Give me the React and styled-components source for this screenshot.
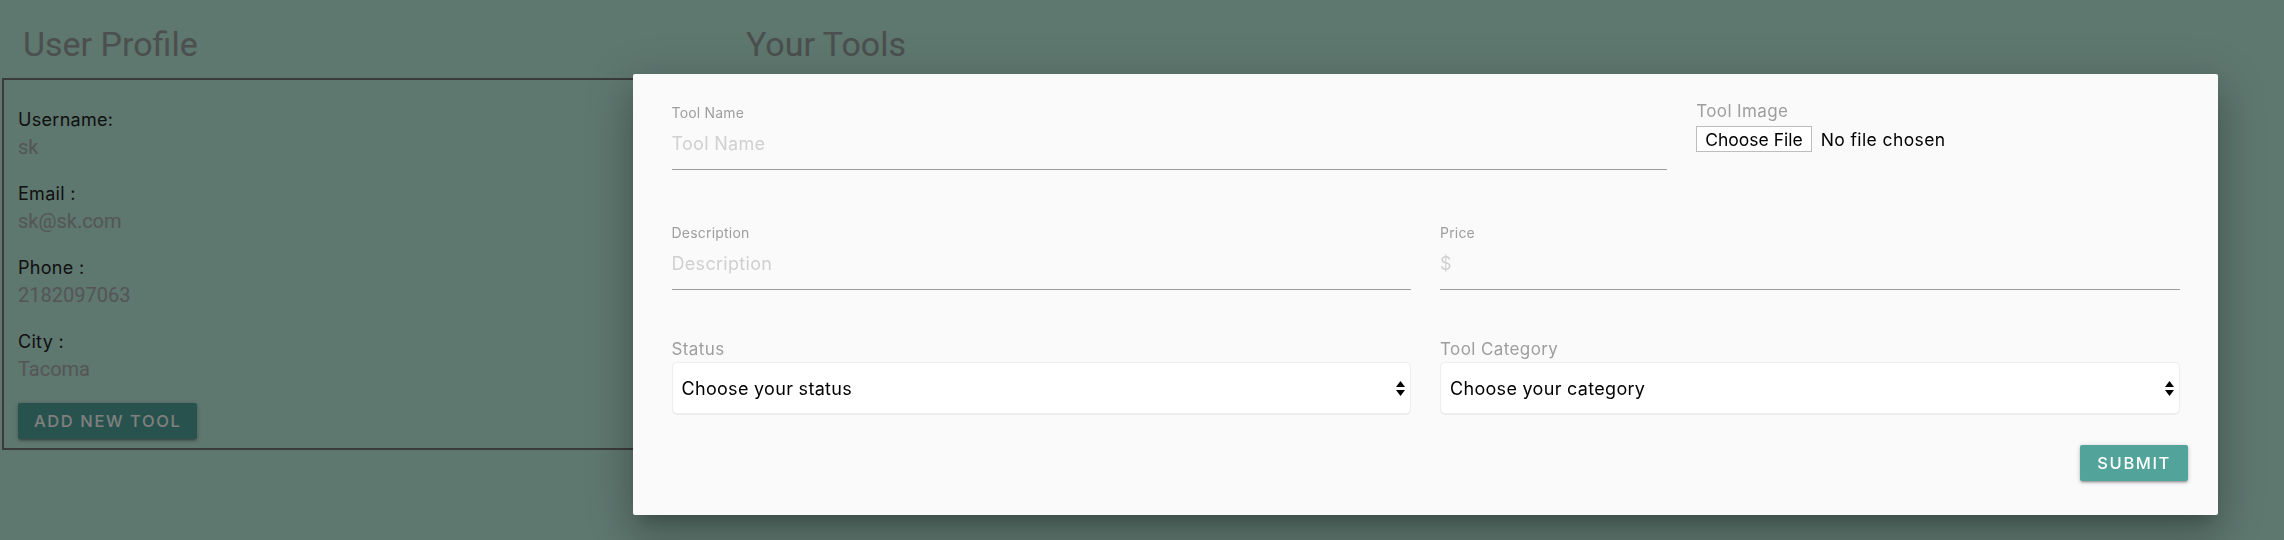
import React from 'react'
import styled, { createGlobalStyle } from 'styled-components'

const GlobalStyle = createGlobalStyle`
  html, body {
    margin: 0;
    padding: 0;
  }
  body {
    background: #bdeedf;
    font-family: Roboto, "Liberation Sans", sans-serif;
    overflow: hidden;
  }
  * {
    box-sizing: border-box;
  }
`

const Page = styled.div`
  display: flex;
  align-items: flex-start;
  min-height: 540px;
`

const ProfileColumn = styled.section`
  flex: none;
  width: 745px;
`

const ToolsColumn = styled.section`
  flex: 1;
`

const Heading = styled.h2`
  margin: 24px 0 14px;
  padding-left: ${props => props.$indent}px;
  font: 400 34px/40px Roboto, "Liberation Sans", sans-serif;
  color: #979f9b;
`

const ProfileCard = styled.div`
  width: 700px;
  margin-left: 2px;
  border: 2px solid #777;
  padding: 28.5px 14px 9px;
  display: flex;
  flex-direction: column;
  align-items: flex-start;
`

const InfoGroup = styled.div`
  & + & {
    margin-top: 24px;
  }
`

const InfoLabel = styled.div`
  font: 400 18px/22px Inter, "Noto Sans", sans-serif;
  letter-spacing: 0.3px;
  color: #222;
`

const InfoValue = styled.div`
  margin-top: 4px;
  font: 400 20px/24px Roboto, "Liberation Sans", sans-serif;
  color: #a9adab;
`

const RaisedButton = styled.button`
  height: 36px;
  padding: 0 ${props => props.$pad}px;
  border: none;
  border-radius: 2px;
  background: ${props => props.$bg};
  color: #fff;
  font: 500 16.5px/36px Inter, "Noto Sans", sans-serif;
  letter-spacing: 1.6px;
  text-transform: uppercase;
  box-shadow: 0 2px 2px 0 rgba(0, 0, 0, 0.14), 0 3px 1px -2px rgba(0, 0, 0, 0.12), 0 1px 5px 0 rgba(0, 0, 0, 0.2);
  cursor: pointer;
`

const AddButton = styled(RaisedButton)`
  margin-top: 22px;
`

const Overlay = styled.div`
  position: fixed;
  inset: 0;
  background: rgba(0, 0, 0, 0.5);
  z-index: 10;
`

const Modal = styled.div`
  position: absolute;
  top: 74px;
  left: 633px;
  width: 1585px;
  z-index: 11;
  padding: 27px 24px 34px;
  background: #fafafa;
  border-radius: 2px;
  box-shadow: 0 24px 38px 3px rgba(0, 0, 0, 0.14), 0 9px 46px 8px rgba(0, 0, 0, 0.12), 0 11px 15px -7px rgba(0, 0, 0, 0.2);
  font-family: Inter, "Noto Sans", sans-serif;
`

const FormRow = styled.div`
  display: flex;
  align-items: flex-start;
  margin-top: ${props => props.$spacing || 0}px;
`

const Col = styled.div`
  flex: none;
  width: ${props => (props.$span / 12) * 100}%;
  padding: 0 14.5px;
`

const FieldLabel = styled.label`
  display: block;
  margin-top: 3px;
  font: 400 14px/17px Inter, "Noto Sans", sans-serif;
  letter-spacing: 0.2px;
  color: #9e9e9e;
`

const TextInput = styled.input`
  display: block;
  width: 100%;
  height: 49px;
  padding: 0 0 4px;
  border: none;
  border-bottom: 1px solid #9e9e9e;
  background: transparent;
  font: 400 18px Inter, "Noto Sans", sans-serif;
  letter-spacing: 0.3px;
  color: #000;
  outline: none;

  &::placeholder {
    color: #d0d0d0;
  }
`

const BigLabel = styled.label`
  display: block;
  font: 400 17px/20px Inter, "Noto Sans", sans-serif;
  letter-spacing: 0.4px;
  color: #9e9e9e;
`

const FilePicker = styled.div`
  display: flex;
  align-items: center;
  margin-top: 5px;
  font: 400 17.5px Inter, "Noto Sans", sans-serif;
  letter-spacing: 0.4px;
  color: #000;
`

const FileButton = styled.button`
  height: 26px;
  padding: 0 8px;
  border: 1px solid #bdbdbd;
  background: #fff;
  font: inherit;
  color: inherit;
`

const FileStatus = styled.span`
  margin-left: 9px;
`

const SelectBox = styled.div`
  display: flex;
  align-items: center;
  height: 52px;
  margin-top: 3px;
  padding-right: 5px;
  background: #fff;
  border: 1px solid #eeeeee;
  border-radius: 5px;
  box-shadow: 0 1px 0 #ececec;
`

const Select = styled.select`
  flex: 1;
  height: 100%;
  padding: 0 0 0 9px;
  border: none;
  background: transparent;
  appearance: none;
  font: 400 18px Inter, "Noto Sans", sans-serif;
  letter-spacing: 0.3px;
  color: #000;
  outline: none;
`

const Footer = styled.div`
  display: flex;
  justify-content: flex-end;
  margin-top: 31px;
  padding-right: 6px;
`

const SelectArrows = () => (
  <svg width="9" height="15" viewBox="0 0 9 15">
    <polygon points="0,6 4.5,0 9,6" fill="#000" />
    <polygon points="0,9 4.5,15 9,9" fill="#000" />
  </svg>
)

const profile = [
  { label: 'Username:', value: 'sk' },
  { label: 'Email :', value: 'sk@sk.com' },
  { label: 'Phone :', value: '2182097063' },
  { label: 'City :', value: 'Tacoma' }
]

const SelectField = ({ label, placeholder }) => (
  <Col $span={6}>
    <BigLabel>{label}</BigLabel>
    <SelectBox>
      <Select defaultValue="">
        <option value="" disabled>{placeholder}</option>
      </Select>
      <SelectArrows />
    </SelectBox>
  </Col>
)

export default function App() {
  return (
    <>
      <GlobalStyle />
      <Page>
        <ProfileColumn>
          <Heading $indent={23}>User Profile</Heading>
          <ProfileCard>
            {profile.map(item => (
              <InfoGroup key={item.label}>
                <InfoLabel>{item.label}</InfoLabel>
                <InfoValue>{item.value}</InfoValue>
              </InfoGroup>
            ))}
            <AddButton $bg="#4ea59a" $pad={16}>Add New Tool</AddButton>
          </ProfileCard>
        </ProfileColumn>
        <ToolsColumn>
          <Heading $indent={1}>Your Tools</Heading>
        </ToolsColumn>
      </Page>

      <Overlay />
      <Modal>
        <form onSubmit={e => e.preventDefault()}>
          <FormRow>
            <Col $span={8}>
              <FieldLabel htmlFor="toolName">Tool Name</FieldLabel>
              <TextInput id="toolName" type="text" placeholder="Tool Name" />
            </Col>
            <Col $span={4}>
              <BigLabel>Tool Image</BigLabel>
              <FilePicker>
                <FileButton type="button">Choose File</FileButton>
                <FileStatus>No file chosen</FileStatus>
              </FilePicker>
            </Col>
          </FormRow>
          <FormRow $spacing={51}>
            <Col $span={6}>
              <FieldLabel htmlFor="description">Description</FieldLabel>
              <TextInput id="description" type="text" placeholder="Description" />
            </Col>
            <Col $span={6}>
              <FieldLabel htmlFor="price">Price</FieldLabel>
              <TextInput id="price" type="text" placeholder="$" />
            </Col>
          </FormRow>
          <FormRow $spacing={49}>
            <SelectField label="Status" placeholder="Choose your status" />
            <SelectField label="Tool Category" placeholder="Choose your category" />
          </FormRow>
          <Footer>
            <RaisedButton type="submit" $bg="#52a39a" $pad={17}>Submit</RaisedButton>
          </Footer>
        </form>
      </Modal>
    </>
  )
}
